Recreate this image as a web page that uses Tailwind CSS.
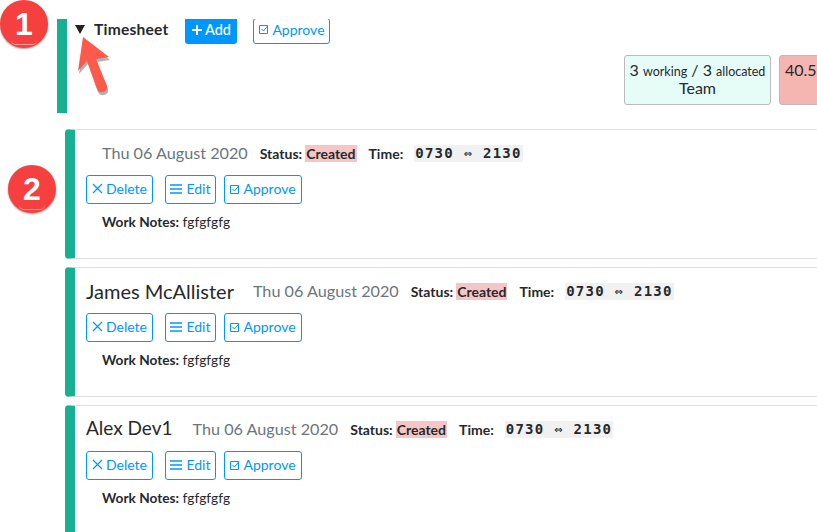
<!DOCTYPE html>
<html lang="en">
<head>
    <meta charset="UTF-8">
    <title>Timesheet</title>
    <script src="https://cdn.jsdelivr.net/npm/@tailwindcss/browser@4"></script>
</head>
<body class="bg-white font-['Lato',sans-serif] text-[#26292c] overflow-hidden">
    <div class="relative w-[817px] h-[532px] overflow-hidden pt-[19px]">

        <!-- timesheet header -->
        <section class="ml-[57px] h-[94px] border-l-[10px] border-[#17b092] overflow-hidden relative">
            <div class="flex items-start h-[25px]">
                <span class="ml-[8px] mt-[6px] w-[10px] h-[9px] bg-[#222] [clip-path:polygon(0_0,100%_0,50%_100%)]"></span>
                <h1 class="ml-[9px] text-[15.6px] leading-[20px] font-bold tracking-[0.2px]">Timesheet</h1>
                <button class="ml-[17px] w-[52px] h-[25px] pb-[3px] bg-[#0096ff] text-white rounded-b-[3px] text-[14.5px] font-medium flex items-center justify-center gap-[3px]">
                    <svg width="10" height="10" viewBox="0 0 10 10" stroke="white" stroke-width="2"><path d="M5 0v10M0 5h10"/></svg>Add
                </button>
                <button class="ml-[16px] w-[77px] h-[26px] pb-[4px] -mt-px border border-[#0096ff] text-[#0096ff] rounded-[3px] text-[14px] flex items-center justify-center gap-[3px]">
                    <svg width="10" height="10" viewBox="0 0 10 10" fill="none" stroke="#0096ff"><path d="M.5 1.5h8v8h-8z"/><path d="M2.5 5l2 2L9 1.5"/></svg>Approve
                </button>
            </div>
            <div class="flex gap-[8px] mt-[11px] ml-[557px]">
                <div class="w-[147px] h-[50px] shrink-0 bg-[#e6fcf7] border border-[#bbb] rounded-[3px] text-center text-[16px] leading-[18px] pt-[5px]">
                    <div class="whitespace-nowrap">3 <span class="text-[12.5px]">working</span> / 3 <span class="text-[12.5px]">allocated</span></div>
                    <div class="-mt-[2px]">Team</div>
                </div>
                <div class="w-[80px] h-[50px] shrink-0 bg-[#f5b5b0] border border-[#bbb] rounded-[3px] text-[16px] leading-[18px] pt-[5px] pl-[5px]">40.5</div>
            </div>
        </section>

        <!-- entries -->
        <div class="ml-[65px] mt-[16px] flex flex-col gap-[8px]">
            <article class="w-[760px] h-[130px] border-l-[10px] border-l-[#17b092] border-y border-y-[#e0e0e0] rounded-l-[4px] pl-[11px]">
                <div class="flex items-center h-[24px] mt-[11px] pl-[16px]">
                    <span class="text-[16.2px] text-[#6c757d] whitespace-nowrap">Thu 06 August 2020</span>
                    <b class="ml-[12px] text-[14px]">Status:</b>
                    <b class="ml-[3px] text-[14px] bg-[#f5c6c5] px-px leading-[17px]">Created</b>
                    <b class="ml-[12px] text-[14px]">Time:</b>
                    <code class="ml-[11px] bg-[#f1f1f1] px-[1px] font-['DejaVu_Sans_Mono',monospace] text-[14px] tracking-[1.25px] font-bold leading-[17px] whitespace-pre">0730 <span class="font-normal">⇔</span> 2130</code>
                </div>
                <div class="flex mt-[10px]">
                    <button class="w-[67px] h-[29px] pb-[2px] border border-[#0096ff] rounded-[3px] text-[#0096ff] text-[14px] flex items-center justify-center gap-[3px]"><svg width="11" height="11" viewBox="0 0 11 11" stroke="#0096ff" stroke-width="1.2"><path d="M1 1l9 9M10 1l-9 9"/></svg>Delete</button>
                    <button class="ml-[12px] w-[51px] h-[29px] pb-[2px] border border-[#0096ff] rounded-[3px] text-[#0096ff] text-[14px] flex items-center justify-center gap-[4px]"><svg width="12" height="10" viewBox="0 0 12 10" stroke="#0096ff" stroke-width="1.5"><path d="M0 1h12M0 5h12M0 9h12"/></svg>Edit</button>
                    <button class="ml-[8px] w-[78px] h-[29px] pb-[2px] border border-[#0096ff] rounded-[3px] text-[#0096ff] text-[14px] flex items-center justify-center gap-[3px]"><svg width="10" height="10" viewBox="0 0 10 10" fill="none" stroke="#0096ff"><path d="M.5 1.5h8v8h-8z"/><path d="M2.5 5l2 2L9 1.5"/></svg>Approve</button>
                </div>
                <p class="mt-[9px] ml-[16px] text-[13.7px] leading-[18px]"><b>Work Notes:</b> fgfgfgfg</p>
            </article>

            <article class="w-[760px] h-[130px] border-l-[10px] border-l-[#17b092] border-y border-y-[#e0e0e0] rounded-l-[4px] pl-[11px]">
                <div class="flex items-center h-[24px] mt-[11px]">
                    <span class="text-[20px] -mt-px whitespace-nowrap">James McAllister</span>
                    <span class="ml-[19px] text-[16.2px] text-[#6c757d] whitespace-nowrap">Thu 06 August 2020</span>
                    <b class="ml-[12px] text-[14px]">Status:</b>
                    <b class="ml-[3px] text-[14px] bg-[#f5c6c5] px-px leading-[17px]">Created</b>
                    <b class="ml-[12px] text-[14px]">Time:</b>
                    <code class="ml-[11px] bg-[#f1f1f1] px-[1px] font-['DejaVu_Sans_Mono',monospace] text-[14px] tracking-[1.25px] font-bold leading-[17px] whitespace-pre">0730 <span class="font-normal">⇔</span> 2130</code>
                </div>
                <div class="flex mt-[10px]">
                    <button class="w-[67px] h-[29px] pb-[2px] border border-[#0096ff] rounded-[3px] text-[#0096ff] text-[14px] flex items-center justify-center gap-[3px]"><svg width="11" height="11" viewBox="0 0 11 11" stroke="#0096ff" stroke-width="1.2"><path d="M1 1l9 9M10 1l-9 9"/></svg>Delete</button>
                    <button class="ml-[12px] w-[51px] h-[29px] pb-[2px] border border-[#0096ff] rounded-[3px] text-[#0096ff] text-[14px] flex items-center justify-center gap-[4px]"><svg width="12" height="10" viewBox="0 0 12 10" stroke="#0096ff" stroke-width="1.5"><path d="M0 1h12M0 5h12M0 9h12"/></svg>Edit</button>
                    <button class="ml-[8px] w-[78px] h-[29px] pb-[2px] border border-[#0096ff] rounded-[3px] text-[#0096ff] text-[14px] flex items-center justify-center gap-[3px]"><svg width="10" height="10" viewBox="0 0 10 10" fill="none" stroke="#0096ff"><path d="M.5 1.5h8v8h-8z"/><path d="M2.5 5l2 2L9 1.5"/></svg>Approve</button>
                </div>
                <p class="mt-[9px] ml-[16px] text-[13.7px] leading-[18px]"><b>Work Notes:</b> fgfgfgfg</p>
            </article>

            <article class="w-[760px] h-[130px] border-l-[10px] border-l-[#17b092] border-y border-y-[#e0e0e0] rounded-l-[4px] pl-[11px]">
                <div class="flex items-center h-[24px] mt-[11px]">
                    <span class="text-[19px] -mt-px whitespace-nowrap">Alex Dev1</span>
                    <span class="ml-[20px] text-[16.2px] text-[#6c757d] whitespace-nowrap">Thu 06 August 2020</span>
                    <b class="ml-[12px] text-[14px]">Status:</b>
                    <b class="ml-[3px] text-[14px] bg-[#f5c6c5] px-px leading-[17px]">Created</b>
                    <b class="ml-[12px] text-[14px]">Time:</b>
                    <code class="ml-[11px] bg-[#f1f1f1] px-[1px] font-['DejaVu_Sans_Mono',monospace] text-[14px] tracking-[1.25px] font-bold leading-[17px] whitespace-pre">0730 <span class="font-normal">⇔</span> 2130</code>
                </div>
                <div class="flex mt-[10px]">
                    <button class="w-[67px] h-[29px] pb-[2px] border border-[#0096ff] rounded-[3px] text-[#0096ff] text-[14px] flex items-center justify-center gap-[3px]"><svg width="11" height="11" viewBox="0 0 11 11" stroke="#0096ff" stroke-width="1.2"><path d="M1 1l9 9M10 1l-9 9"/></svg>Delete</button>
                    <button class="ml-[12px] w-[51px] h-[29px] pb-[2px] border border-[#0096ff] rounded-[3px] text-[#0096ff] text-[14px] flex items-center justify-center gap-[4px]"><svg width="12" height="10" viewBox="0 0 12 10" stroke="#0096ff" stroke-width="1.5"><path d="M0 1h12M0 5h12M0 9h12"/></svg>Edit</button>
                    <button class="ml-[8px] w-[78px] h-[29px] pb-[2px] border border-[#0096ff] rounded-[3px] text-[#0096ff] text-[14px] flex items-center justify-center gap-[3px]"><svg width="10" height="10" viewBox="0 0 10 10" fill="none" stroke="#0096ff"><path d="M.5 1.5h8v8h-8z"/><path d="M2.5 5l2 2L9 1.5"/></svg>Approve</button>
                </div>
                <p class="mt-[9px] ml-[16px] text-[13.7px] leading-[18px]"><b>Work Notes:</b> fgfgfgfg</p>
            </article>
        </div>

        <!-- annotations over the screenshot -->
        <div class="absolute left-0 top-0 w-[48px] h-[48px] rounded-full bg-[#f5403f] shadow-[0_1px_2px_rgba(0,0,0,0.4)] text-white font-['Liberation_Sans',sans-serif] font-bold text-[32px] leading-[48px] text-center">1<span class="absolute left-[11px] bottom-[3px] w-[26px] h-[5px] border-b border-white/50 rounded-b-full"></span></div>
        <div class="absolute left-[8px] top-[165px] w-[48px] h-[48px] rounded-full bg-[#f5403f] shadow-[0_1px_2px_rgba(0,0,0,0.4)] text-white font-['Liberation_Sans',sans-serif] font-bold text-[32px] leading-[48px] text-center">2<span class="absolute left-[11px] bottom-[3px] w-[26px] h-[5px] border-b border-white/50 rounded-b-full"></span></div>
        <svg class="absolute left-[76px] top-[36px]" width="40" height="62" viewBox="0 0 40 62">
            <path d="M7 1L33 21 20 23 31 50Q32 55 27 56 23 57 21 53L11 25 2 35Z" fill="#000" opacity="0.3" transform="translate(1 3)"/>
            <path d="M7 1L33 21 20 23 31 50Q32 55 27 56 23 57 21 53L11 25 2 35Z" fill="#fd5a4c"/>
        </svg>
    </div>
</body>
</html>
